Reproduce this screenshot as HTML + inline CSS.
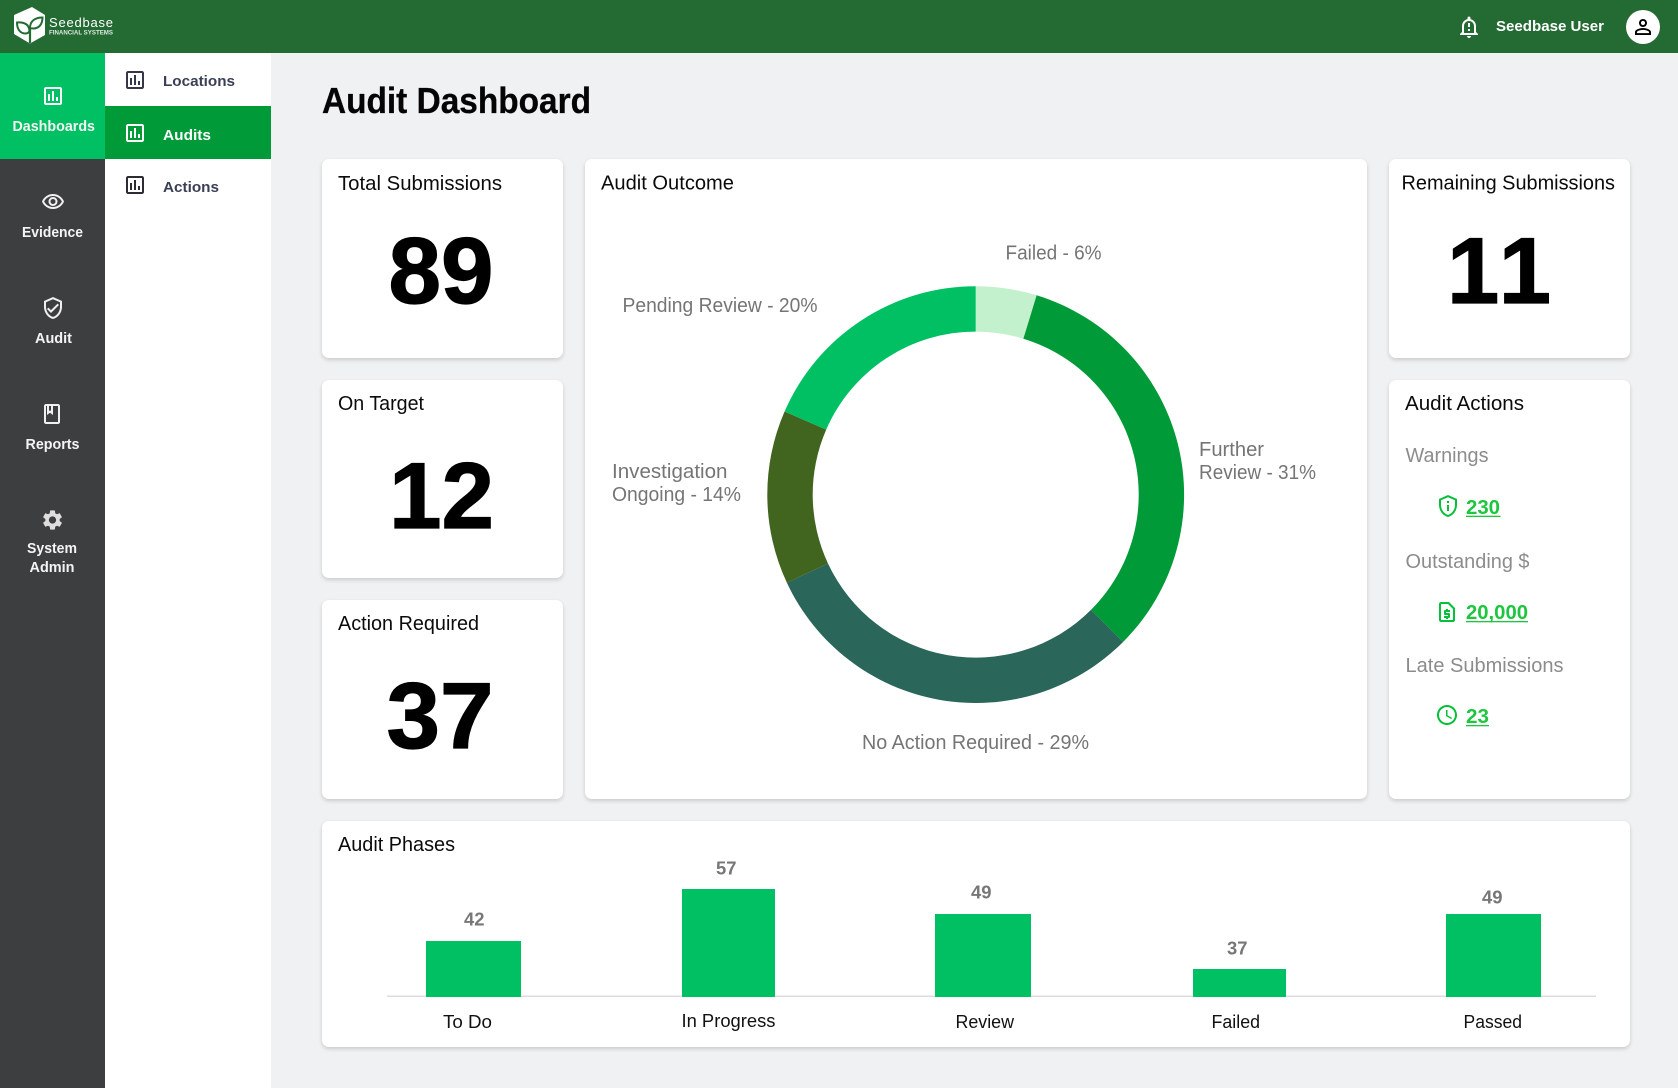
<!DOCTYPE html>
<html lang="en">
<head>
<meta charset="utf-8">
<title>Audit Dashboard</title>
<style>
html,body{margin:0;padding:0;width:1678px;height:1088px;overflow:hidden;background:#f0f1f3;font-family:"Liberation Sans",sans-serif}
.c{position:absolute;background:#fff;border-radius:7px;box-shadow:0 2px 4px rgba(0,0,0,.16)}
svg.o{position:absolute;left:0;top:0}
text{font-family:"Liberation Sans",sans-serif}
.h{font-size:20px;fill:#0b0b0b}
.n{font-size:94px;font-weight:700;fill:#000;stroke:#000;stroke-width:1.2px}
.s{font-size:14.5px;font-weight:700;fill:#f4f4f4}
.m{font-size:15px;font-weight:700;fill:#3a3f55}
.l{font-size:20px;fill:#757575}
.g{font-size:20px;fill:#8c8c8c}
.v{font-size:20.5px;font-weight:700;fill:#1ec53f}
.b{font-size:18px;font-weight:700;fill:#777}
.x{font-size:18px;fill:#111}
</style>
</head>
<body>
<div class="c" style="left:322px;top:159px;width:241px;height:199px"></div>
<div class="c" style="left:322px;top:380px;width:241px;height:198px"></div>
<div class="c" style="left:322px;top:600px;width:241px;height:199px"></div>
<div class="c" style="left:585px;top:159px;width:782px;height:640px"></div>
<div class="c" style="left:1389px;top:159px;width:241px;height:199px"></div>
<div class="c" style="left:1389px;top:380px;width:241px;height:419px"></div>
<div class="c" style="left:322px;top:821px;width:1308px;height:226px"></div>
<svg class="o" width="1678" height="1088" viewBox="0 0 1678 1088" xmlns="http://www.w3.org/2000/svg">
<!-- frame -->
<rect x="0" y="53" width="105" height="1035" fill="#3d3e40"/>
<rect x="105" y="53" width="166" height="1035" fill="#fff"/>
<rect x="0" y="0" width="1678" height="53" fill="#246a33"/>
<rect x="0" y="53" width="105" height="106" fill="#00c064"/>
<rect x="105" y="106" width="166" height="53" fill="#019a38"/>

<!-- logo -->
<path d="M32 7L45 15V35L30 43.5L14 34V15Z" fill="#fff"/>
<path d="M30 43V29" stroke="#246a33" stroke-width="2.2" fill="none"/>
<path d="M29.5 31C29 24 24 22 17 22.5C17 29 20 33.5 25.5 33.5C27 33.5 28.5 33 29.5 31Z" fill="none" stroke="#246a33" stroke-width="2"/>
<path d="M30 28C30 21 35 17.5 42.5 17.5C42.5 24 39 28.5 33.5 28.5C32.5 28.5 31 28.5 30 28Z" fill="none" stroke="#246a33" stroke-width="2"/>
<text x="49" y="27" font-size="13" fill="#fff" textLength="64" lengthAdjust="spacing">Seedbase</text>
<text x="49" y="34.5" font-size="6" font-weight="700" fill="#dfe9e0" textLength="64" lengthAdjust="spacingAndGlyphs">FINANCIAL SYSTEMS</text>

<!-- header right -->
<path transform="translate(1457 15)" fill="#fff" d="M10.01 21.01c0 1.1.89 1.99 1.99 1.99s1.99-.89 1.99-1.99h-3.98zM12 6c2.76 0 5 2.24 5 5v7H7v-7c0-2.76 2.24-5 5-5zm0-4.5c-.83 0-1.5.67-1.5 1.5v1.17C7.36 4.85 5 7.65 5 11v6l-2 2v1h18v-1l-2-2v-6c0-3.35-2.36-6.15-5.5-6.83V3c0-.83-.67-1.5-1.5-1.5zM11 8h2v4h-2zm0 6h2v2h-2z"/>
<text x="1496" y="31" font-size="15" font-weight="700" fill="#fff" textLength="108" lengthAdjust="spacingAndGlyphs">Seedbase User</text>
<circle cx="1643" cy="27" r="17" fill="#fff"/>
<path transform="translate(1631 15)" fill="#000" d="M12 5.9c1.16 0 2.1.94 2.1 2.1s-.94 2.1-2.1 2.1S9.9 9.16 9.9 8s.94-2.1 2.1-2.1m0 9c2.97 0 6.1 1.46 6.1 2.1v1.1H5.9V17c0-.64 3.13-2.1 6.1-2.1M12 4C9.79 4 8 5.79 8 8s1.79 4 4 4 4-1.79 4-4-1.79-4-4-4zm0 9c-2.67 0-8 1.34-8 4v3h16v-3c0-2.66-5.33-4-8-4z"/>

<!-- sidebar icons -->
<defs><path id="bar" d="M19 3H5c-1.1 0-2 .9-2 2v14c0 1.1.9 2 2 2h14c1.1 0 2-.9 2-2V5c0-1.1-.9-2-2-2zm0 16H5V5h14v14zM9 17H7v-7h2v7zm4 0h-2V7h2v10zm4 0h-2v-4h2v4z"/></defs>
<use href="#bar" transform="translate(41 84)" fill="#fff"/>
<path transform="translate(41 190)" fill="#f0f0f0" d="M12 6c3.79 0 7.17 2.13 8.82 5.5C19.17 14.87 15.79 17 12 17s-7.17-2.13-8.82-5.5C4.83 8.13 8.21 6 12 6m0-2C7 4 2.73 7.11 1 11.5 2.73 15.89 7 19 12 19s9.27-3.11 11-7.5C21.27 7.11 17 4 12 4zm0 5c1.38 0 2.5 1.12 2.5 2.5S13.38 14 12 14s-2.5-1.12-2.5-2.5S10.62 9 12 9m0-2c-2.48 0-4.5 2.02-4.5 4.5S9.52 16 12 16s4.5-2.02 4.5-4.5S14.48 7 12 7z"/>
<path transform="translate(41 296)" fill="#f0f0f0" d="M12 1L3 5v6c0 5.55 3.84 10.74 9 12 5.16-1.26 9-6.45 9-12V5l-9-4zm7 10c0 4.52-2.98 8.69-7 9.93-4.02-1.24-7-5.41-7-9.93V6.3l7-3.11 7 3.11V11zm-11.59.59L6 13l4 4 8-8-1.41-1.42L10 14.17z"/>
<path transform="translate(40 402)" fill="#f0f0f0" d="M18 2H6c-1.1 0-2 .9-2 2v16c0 1.1.9 2 2 2h12c1.1 0 2-.9 2-2V4c0-1.1-.9-2-2-2zM9 4h2v5l-1-.75L9 9V4zm9 16H6V4h1v9l3-2.25L13 13V4h5v16z"/>
<path transform="translate(40.5 508)" fill="#dedede" d="M19.14 12.94c.04-.3.06-.61.06-.94 0-.32-.02-.64-.07-.94l2.03-1.58c.18-.14.23-.41.12-.61l-1.92-3.32c-.12-.22-.37-.29-.59-.22l-2.39.96c-.5-.38-1.03-.7-1.62-.94l-.36-2.54c-.04-.24-.24-.41-.48-.41h-3.84c-.24 0-.43.17-.47.41l-.36 2.54c-.59.24-1.13.57-1.62.94l-2.39-.96c-.22-.08-.47 0-.59.22L2.74 8.87c-.12.21-.08.47.12.61l2.03 1.58c-.05.3-.09.63-.09.94s.02.64.07.94l-2.03 1.58c-.18.14-.23.41-.12.61l1.92 3.32c.12.22.37.29.59.22l2.39-.96c.5.38 1.03.7 1.62.94l.36 2.54c.05.24.24.41.48.41h3.84c.24 0 .44-.17.47-.41l.36-2.54c.59-.24 1.13-.56 1.62-.94l2.39.96c.22.08.47 0 .59-.22l1.92-3.32c.12-.22.07-.47-.12-.61l-2.01-1.58zM12 15.6c-1.98 0-3.6-1.62-3.6-3.6s1.62-3.6 3.6-3.6 3.6 1.62 3.6 3.6-1.62 3.6-3.6 3.6z"/>
<use href="#bar" transform="translate(123 68)" fill="#33374a"/>
<use href="#bar" transform="translate(123 121)" fill="#fff"/>
<use href="#bar" transform="translate(123 173)" fill="#2c2d33"/>

<!-- sidebar text -->
<text class="s" x="12.5" y="131" textLength="82.5" lengthAdjust="spacingAndGlyphs" fill="#fff">Dashboards</text>
<text class="s" x="22" y="237" textLength="61" lengthAdjust="spacingAndGlyphs">Evidence</text>
<text class="s" x="35" y="343" textLength="37" lengthAdjust="spacingAndGlyphs">Audit</text>
<text class="s" x="25.5" y="449" textLength="54" lengthAdjust="spacingAndGlyphs">Reports</text>
<text class="s" x="27" y="553" textLength="50" lengthAdjust="spacingAndGlyphs">System</text>
<text class="s" x="29.5" y="572" textLength="45" lengthAdjust="spacingAndGlyphs">Admin</text>
<text class="m" x="163" y="86" textLength="72" lengthAdjust="spacingAndGlyphs">Locations</text>
<text class="m" x="163" y="140" textLength="48" lengthAdjust="spacingAndGlyphs" style="fill:#fff">Audits</text>
<text class="m" x="163" y="192" textLength="56" lengthAdjust="spacingAndGlyphs">Actions</text>

<!-- title -->
<text x="322" y="113" font-size="36" font-weight="700" fill="#050505" stroke="#050505" stroke-width=".3" textLength="269" lengthAdjust="spacingAndGlyphs">Audit Dashboard</text>

<!-- stat cards -->
<text class="h" x="338" y="190" textLength="164" lengthAdjust="spacingAndGlyphs">Total Submissions</text>
<text class="n" x="388.5" y="303" textLength="105" lengthAdjust="spacingAndGlyphs">89</text>
<text class="h" x="338" y="410" textLength="86" lengthAdjust="spacingAndGlyphs">On Target</text>
<text class="n" x="389" y="528" textLength="105" lengthAdjust="spacingAndGlyphs">12</text>
<text class="h" x="338" y="630" textLength="141" lengthAdjust="spacingAndGlyphs">Action Required</text>
<text class="n" x="386.5" y="748" textLength="107" lengthAdjust="spacingAndGlyphs">37</text>
<text class="h" x="1401.5" y="189.5" textLength="213.5" lengthAdjust="spacingAndGlyphs">Remaining Submissions</text>
<text class="n" x="1447" y="303" textLength="104" lengthAdjust="spacing">11</text>

<!-- donut -->
<text class="h" x="601" y="189.5" textLength="133" lengthAdjust="spacingAndGlyphs">Audit Outcome</text>
<path fill="#c3f0cd" d="M975.7 286.2A208.4 208.4 0 0 1 1036.63 295.31L1023.36 338.72A163 163 0 0 0 975.7 331.6Z"/>
<path fill="#019a38" d="M1036.63 295.31A208.4 208.4 0 0 1 1123.06 641.96L1090.96 609.86A163 163 0 0 0 1023.36 338.72Z"/>
<path fill="#2a6659" d="M1123.06 641.96A208.4 208.4 0 0 1 786.83 582.67L827.97 563.49A163 163 0 0 0 1090.96 609.86Z"/>
<path fill="#41651f" d="M786.83 582.67A208.4 208.4 0 0 1 784.58 411.5L826.22 429.6A163 163 0 0 0 827.97 563.49Z"/>
<path fill="#00c064" d="M784.58 411.5A208.4 208.4 0 0 1 975.7 286.2L975.7 331.6A163 163 0 0 0 826.22 429.6Z"/>
<text class="l" x="1005.5" y="259.5" textLength="96" lengthAdjust="spacingAndGlyphs">Failed - 6%</text>
<text class="l" x="622.5" y="312" textLength="195" lengthAdjust="spacingAndGlyphs">Pending Review - 20%</text>
<text class="l" x="1199" y="456" textLength="65" lengthAdjust="spacingAndGlyphs">Further</text>
<text class="l" x="1199" y="479" textLength="117" lengthAdjust="spacingAndGlyphs">Review - 31%</text>
<text class="l" x="612" y="478" textLength="115.5" lengthAdjust="spacingAndGlyphs">Investigation</text>
<text class="l" x="612" y="501" textLength="129" lengthAdjust="spacingAndGlyphs">Ongoing - 14%</text>
<text class="l" x="862" y="749" textLength="227" lengthAdjust="spacingAndGlyphs">No Action Required - 29%</text>

<!-- audit actions -->
<text class="h" x="1405" y="410" textLength="119" lengthAdjust="spacingAndGlyphs">Audit Actions</text>
<text class="g" x="1405.5" y="462" textLength="83" lengthAdjust="spacingAndGlyphs">Warnings</text>
<path transform="translate(1436 494)" fill="#06bf3a" d="M12 3.19l7 3.11V11c0 4.52-2.98 8.69-7 9.93-4.02-1.24-7-5.41-7-9.93V6.3l7-3.11M12 1L3 5v6c0 5.55 3.84 10.74 9 12 5.16-1.26 9-6.45 9-12V5l-9-4zm-1 6h2v2h-2zm0 4h2v6h-2z"/>
<text class="v" x="1466" y="514" textLength="34" lengthAdjust="spacingAndGlyphs">230</text>
<rect x="1466" y="515.7" width="34.5" height="1.3" fill="#1ec53f"/>
<text class="g" x="1405.5" y="568" textLength="124" lengthAdjust="spacingAndGlyphs">Outstanding $</text>
<path transform="translate(1435 600)" fill="#06bf3a" d="M14 2H6c-1.1 0-2 .9-2 2v16c0 1.1.9 2 2 2h12c1.1 0 2-.9 2-2V8l-6-6zM6 20V4h7l5 5v11H6zM11 19h2v-1h1c.55 0 1-.45 1-1v-3c0-.55-.45-1-1-1h-3v-1h4v-2h-2V9h-2v1h-1c-.55 0-1 .45-1 1v3c0 .55.45 1 1 1h3v1H9v2h2v1z"/>
<text class="v" x="1466" y="619" textLength="62" lengthAdjust="spacingAndGlyphs">20,000</text>
<rect x="1466" y="621" width="62" height="1.3" fill="#1ec53f"/>
<text class="g" x="1405.5" y="672" textLength="158" lengthAdjust="spacingAndGlyphs">Late Submissions</text>
<path transform="translate(1435 703)" fill="#06bf3a" d="M11.99 2C6.47 2 2 6.48 2 12s4.47 10 9.99 10C17.52 22 22 17.52 22 12S17.52 2 11.99 2zM12 20c-4.42 0-8-3.58-8-8s3.58-8 8-8 8 3.58 8 8-3.58 8-8 8zm.5-13H11v6l5.25 3.15.75-1.23-4.5-2.67z"/>
<text class="v" x="1466" y="723" textLength="23" lengthAdjust="spacingAndGlyphs">23</text>
<rect x="1466" y="725" width="23" height="1.3" fill="#1ec53f"/>

<!-- bar chart -->
<text class="h" x="338" y="851" textLength="117" lengthAdjust="spacingAndGlyphs">Audit Phases</text>
<rect x="387" y="995.5" width="1209" height="1.5" fill="#dcdcdc"/>
<rect x="426" y="941" width="95" height="56" fill="#00c064"/>
<rect x="682" y="889" width="93" height="108" fill="#00c064"/>
<rect x="935" y="914" width="96" height="83" fill="#00c064"/>
<rect x="1193" y="969" width="93" height="28" fill="#00c064"/>
<rect x="1446" y="914" width="95" height="83" fill="#00c064"/>
<text class="b" x="464" y="925.5" textLength="20.5" lengthAdjust="spacingAndGlyphs">42</text>
<text class="b" x="716" y="874.5" textLength="20.5" lengthAdjust="spacingAndGlyphs">57</text>
<text class="b" x="971" y="898.5" textLength="20.5" lengthAdjust="spacingAndGlyphs">49</text>
<text class="b" x="1227" y="954.5" textLength="20.5" lengthAdjust="spacingAndGlyphs">37</text>
<text class="b" x="1482" y="903.5" textLength="20.5" lengthAdjust="spacingAndGlyphs">49</text>
<text class="x" x="443" y="1028" textLength="49" lengthAdjust="spacingAndGlyphs">To Do</text>
<text class="x" x="681.5" y="1027" textLength="94" lengthAdjust="spacingAndGlyphs">In Progress</text>
<text class="x" x="955.5" y="1028" textLength="58.5" lengthAdjust="spacingAndGlyphs">Review</text>
<text class="x" x="1211.5" y="1028" textLength="48.5" lengthAdjust="spacingAndGlyphs">Failed</text>
<text class="x" x="1463.5" y="1028" textLength="58.5" lengthAdjust="spacingAndGlyphs">Passed</text>
</svg>
</body>
</html>
